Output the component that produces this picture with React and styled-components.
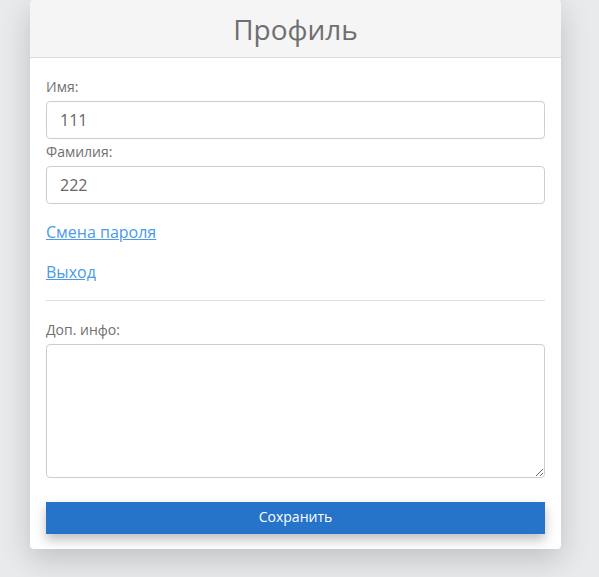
import React from "react";
import styled, { createGlobalStyle } from "styled-components";

const GlobalStyle = createGlobalStyle`
  html, body {
    margin: 0;
    padding: 0;
    background: #e9eaec;
    font-family: "Open Sans", "Liberation Sans", sans-serif;
  }
`;

const Page = styled.div`
  min-height: 577px;
  padding: 0 0 0 30px;
  box-sizing: border-box;
`;

const Card = styled.div`
  width: 531px;
  background: #fff;
  border-radius: 4px;
  box-shadow: 0 10px 30px rgba(0, 0, 0, 0.18);
  overflow: hidden;
`;

const Header = styled.div`
  height: 57px;
  background: #f5f5f5;
  border-bottom: 1px solid #dcdcdc;
  display: flex;
  align-items: center;
  justify-content: center;
`;

const Title = styled.h1`
  margin: 0;
  font-size: 28px;
  font-weight: 400;
  color: #6f6f6f;
`;

const Body = styled.form`
  padding: 19px 16px 15px;
  display: flex;
  flex-direction: column;
`;

const Label = styled.label`
  display: block;
  font-size: 14px;
  line-height: 20px;
  color: #707070;
  margin: ${(p) => (p.$top ? p.$top : "0")} 0 4px;
`;

const Input = styled.input`
  box-sizing: border-box;
  width: 100%;
  height: 38px;
  border: 1px solid #ccced3;
  border-radius: 4px;
  padding: 0 13px;
  font-family: inherit;
  font-size: 16px;
  color: #666;
  outline: none;
`;

const LinkRow = styled.div`
  margin-top: ${(p) => p.$top};
  line-height: 24px;
`;

const Link = styled.a`
  font-size: 16px;
  color: #4a9ae8;
  text-decoration: underline;
  cursor: pointer;
`;

const Divider = styled.hr`
  border: none;
  border-top: 1px solid #dedede;
  margin: 16px 0 0;
`;

const TextArea = styled.textarea`
  box-sizing: border-box;
  width: 100%;
  height: 134px;
  border: 1px solid #ccced3;
  border-radius: 4px;
  padding: 8px 13px;
  font-family: inherit;
  font-size: 16px;
  color: #666;
  resize: vertical;
  display: block;
  outline: none;
`;

const SaveButton = styled.button`
  margin-top: 24px;
  height: 32px;
  width: 100%;
  border: none;
  background: #2673ca;
  color: #fff;
  font-family: inherit;
  font-size: 14px;
  line-height: 30px;
  padding: 0 0 2px;
  box-shadow: 0 6px 12px rgba(0, 0, 0, 0.25);
  cursor: pointer;
`;

export default function App() {
  return (
    <>
      <GlobalStyle />
      <Page>
        <Card>
          <Header>
            <Title>Профиль</Title>
          </Header>
          <Body onSubmit={(e) => e.preventDefault()}>
            <Label>Имя:</Label>
            <Input defaultValue="111" />
            <Label $top="3px">Фамилия:</Label>
            <Input defaultValue="222" />
            <LinkRow $top="16px">
              <Link>Смена пароля</Link>
            </LinkRow>
            <LinkRow $top="16px">
              <Link>Выход</Link>
            </LinkRow>
            <Divider />
            <Label $top="19px">Доп. инфо:</Label>
            <TextArea />
            <SaveButton type="submit">Сохранить</SaveButton>
          </Body>
        </Card>
      </Page>
    </>
  );
}
